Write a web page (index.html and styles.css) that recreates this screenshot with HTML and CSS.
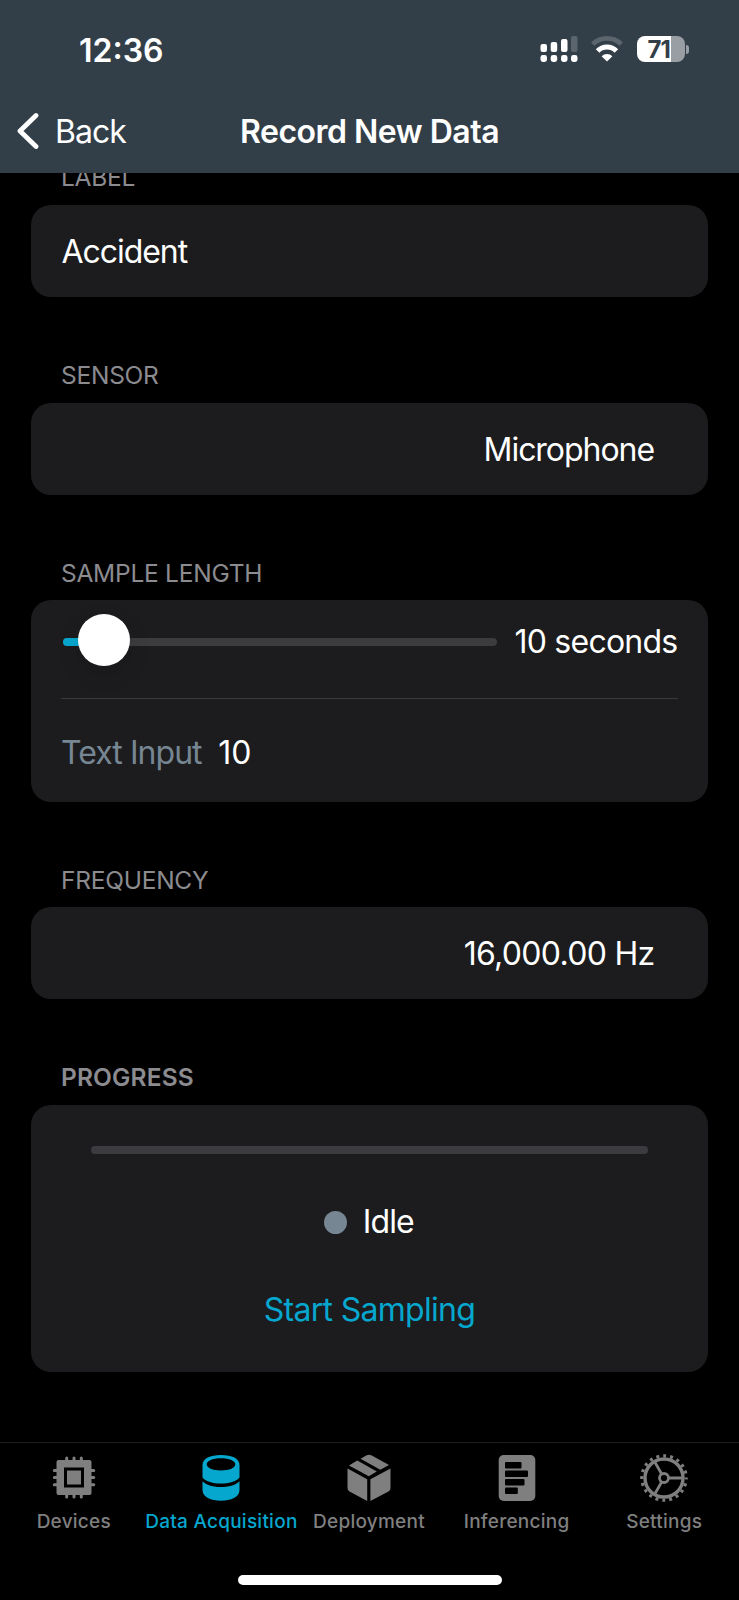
FILE: index.html
```html
<!DOCTYPE html>
<html lang="en">
<head>
<meta charset="utf-8">
<title>Record New Data</title>
<link rel="stylesheet" href="styles.css">
</head>
<body>
<div class="screen">
  <header class="header">
    <div class="status">
      <span class="time">12:36</span>
      <div class="indicators">
        <svg class="signal" viewBox="0 0 38 28" width="38" height="28" fill="#fff">
          <rect x="0.5" y="9" width="6.5" height="8" rx="2"/><rect x="10.7" y="7" width="6.5" height="10" rx="2"/><rect x="21" y="4" width="6.5" height="13" rx="2"/><rect x="31" y="1" width="6.5" height="16" rx="2" fill="#5b656d"/>
          <rect x="0.5" y="20" width="6.5" height="7" rx="2.4"/><rect x="10.7" y="20" width="6.5" height="7" rx="2.4"/><rect x="21" y="20" width="6.5" height="7" rx="2.4"/><rect x="31" y="20" width="6.5" height="7" rx="2.4"/>
        </svg>
        <svg class="wifi" viewBox="0 0 34 28" width="34" height="28">
          <path d="M2.700 9.200a20.500 20.500 0 0 1 28.600 0" fill="none" stroke="#5b656d" stroke-width="4.600"/>
          <path d="M7.600 16a13 13 0 0 1 18.800 0" fill="none" stroke="#fff" stroke-width="5"/>
          <path d="M11.600 21.200a7.600 7.600 0 0 1 10.800 0L17 26.500z" fill="#fff"/>
        </svg>
        <div class="battery"><span class="cell">71</span><span class="nub"></span></div>
      </div>
    </div>
    <nav class="navbar">
      <a class="back"><svg viewBox="0 0 24 38" width="24" height="38"><path d="M21 3.500 5 19l16 15.500" fill="none" stroke="#fff" stroke-width="4.800" stroke-linecap="round" stroke-linejoin="round"/></svg><span>Back</span></a>
      <h1 class="title">Record New Data</h1>
    </nav>
  </header>

  <main class="form">
    <section class="group">
      <h2 class="label">LABEL</h2>
      <div class="card row"><span class="accident">Accident</span></div>
    </section>
    <section class="group">
      <h2 class="label">SENSOR</h2>
      <div class="card row end"><span class="mic">Microphone</span></div>
    </section>
    <section class="group">
      <h2 class="label">SAMPLE LENGTH</h2>
      <div class="card length">
        <div class="slider-row">
          <div class="track"><div class="fill"></div><div class="thumb"></div></div>
          <span class="seconds">10 seconds</span>
        </div>
        <div class="input-row"><span class="hint">Text Input</span><span class="ten">10</span></div>
      </div>
    </section>
    <section class="group">
      <h2 class="label">FREQUENCY</h2>
      <div class="card row end"><span class="hz">16,000.00 Hz</span></div>
    </section>
    <section class="group">
      <h2 class="label strong">PROGRESS</h2>
      <div class="card progress">
        <div class="bar"></div>
        <div class="state"><i class="dot"></i><span class="idle">Idle</span></div>
        <a class="start">Start Sampling</a>
      </div>
    </section>
  </main>

  <footer class="footer">
    <nav class="tabs">
      <a class="tab">
        <svg viewBox="0 0 50 50" width="50" height="50" fill="currentColor">
          <path fill-rule="evenodd" d="M9.500 7h31a2 2 0 0 1 2 2v31a2 2 0 0 1-2 2h-31a2 2 0 0 1-2-2V9a2 2 0 0 1 2-2zM15 14.500V34.500H35V14.500z"/>
          <path d="M18 17.500h14v14H18z"/>
          <path d="M17.700 5v5M25 5v5M32.300 5v5M17.700 40v4M25 40v4M32.300 40v4M5.300 17.500h5M5.300 24.600h5M5.300 31.800h5M40 17.500h4.700M40 24.600h4.700M40 31.800h4.700" stroke="currentColor" stroke-width="3" stroke-linecap="round"/>
        </svg>
        <span>Devices</span></a>
      <a class="tab active">
        <svg viewBox="0 0 50 50" width="50" height="50" fill="currentColor">
          <path fill-rule="evenodd" d="M6.500 12C6.500 5.500 14 2 25 2s18.500 3.500 18.500 10v12.500C40 28.700 33 30.600 25 30.600S10 28.700 6.500 24.500zM10.700 11.300c0 3.500 5.800 6.200 14.300 6.200s14.300-2.700 14.300-6.200S33.500 5.200 25 5.200s-14.300 2.600-14.300 6.100z"/>
          <path d="M6.500 28.300C11 32.500 17.500 34 25 34s14-1.500 18.500-5.700V37c0 7-8.500 10.800-18.500 10.800S6.500 44 6.500 37z"/>
        </svg>
        <span>Data Acquisition</span></a>
      <a class="tab">
        <svg viewBox="0 0 50 50" width="50" height="50" fill="currentColor">
          <path d="M3.500 15.500 23.200 26.300V48L5.500 38.600a4 4 0 0 1-2-3.500z"/>
          <path d="M46.500 15.500 26.400 26.300V48l18.100-9.400a4 4 0 0 0 2-3.500z"/>
          <path d="M5 12.500 13.300 7.500 32.800 18.600 24.800 23.300z"/>
          <path d="M16.500 5.800 22.200 2.500q2.800-1.500 5.600 0L45 12l-8.700 4.800z"/>
        </svg>
        <span>Deployment</span></a>
      <a class="tab">
        <svg viewBox="0 0 50 50" width="50" height="50">
          <rect x="6.700" y="2" width="36.600" height="46" rx="5" fill="currentColor"/>
          <g fill="#000"><rect x="13" y="9" width="16.500" height="6.500" rx="1"/><rect x="13" y="17.500" width="23" height="6.500" rx="1"/><rect x="13" y="26" width="19.500" height="6.500" rx="1"/><rect x="13" y="34.500" width="12.800" height="6.500" rx="1"/></g>
        </svg>
        <span>Inferencing</span></a>
      <a class="tab">
        <svg viewBox="0 0 50 50" width="50" height="50" fill="none" stroke="currentColor">
          <circle cx="25" cy="25" r="19" stroke-width="3.400"/>
          <circle cx="25" cy="25" r="22.200" stroke-width="3.200" stroke-dasharray="2.900 4.074" stroke-dashoffset="1.450"/>
          <circle cx="25" cy="25" r="4.500" stroke-width="2.800"/>
          <path d="M30 25h14M22.500 20.700 15.500 8.500M22.500 29.300l-7 12.200" stroke-width="2.800"/>
        </svg>
        <span>Settings</span></a>
    </nav>
    <div class="home"></div>
  </footer>
</div>
</body>
</html>
```
FILE: styles.css
```css
* { box-sizing: border-box; }
body { margin: 0; background: #000; font-family: Inter, "Liberation Sans", sans-serif; color: #fff; }
h1, h2 { margin: 0; }
.screen { width: 739px; height: 1600px; display: flex; flex-direction: column; overflow: hidden; font-size: 32px; line-height: 40px; white-space: nowrap; }
.header { height: 173px; flex: none; background: #323e48; position: relative; z-index: 1; }
.status { height: 98px; padding: 0 50px 0 79px; display: flex; justify-content: space-between; align-items: center; }
.time { font-weight: 600; margin-top: 3px; }
.indicators { display: flex; align-items: center; }
.wifi { margin-left: 12px; }
.battery { display: flex; align-items: center; margin-left: 13px; gap: 1.500px; }
.cell { width: 48px; height: 26px; border-radius: 8px; background: linear-gradient(90deg, #fff 34px, #989ea4 34px); color: #323e48; font-size: 24px; line-height: 27px; font-weight: 700; padding-left: 11px; letter-spacing: -1px; }
.nub { width: 3px; height: 9px; border-radius: 0 3px 3px 0; background: #989ea4; }
.navbar { height: 67px; display: grid; grid-template-columns: 1fr auto 1fr; align-items: center; padding-left: 15px; padding-right: 15px; }
.back { display: flex; align-items: center; gap: 16px; letter-spacing: -1px; }
.back svg { margin-top: -1px; }
.title { font-size: 32px; line-height: 40px; font-weight: 600; letter-spacing: -0.5px; }
.form { flex: 1; padding: 0 31px; margin-top: -11px; }
.group { margin-bottom: 55px; }
.label { height: 50.400px; padding: 7px 0 0 30px; font-size: 24.500px; line-height: 32px; font-weight: 400; color: #8b8b90; letter-spacing: -0.25px; }
.group:first-child .label { height: 43px; padding-top: 0; margin-top: -1px; margin-bottom: 1px; }
.label.strong { font-weight: 600; letter-spacing: .15px; }
.card { background: #1c1c1e; border-radius: 20px; }
.row { height: 92.300px; padding: 2px 53.500px 0 30.500px; display: flex; align-items: center; }
.accident { letter-spacing: -1.05px; }
.end { justify-content: flex-end; }
.mic { letter-spacing: -1.05px; margin-right: .5px; }
.hz { letter-spacing: -0.7px; }
.length { height: 201.300px; padding: 0 30.500px 0 30px; }
.slider-row { height: 99px; border-bottom: 1px solid #3a3a3d; display: flex; justify-content: space-between; padding-left: 1.500px; padding-top: 21.500px; }
.track { width: 434.500px; height: 8px; border-radius: 4px; background: #3c3c3e; margin-top: 16.500px; position: relative; }
.fill { width: 40px; height: 8px; border-radius: 4px; background: #06a7ce; }
.thumb { position: absolute; left: 15px; top: -24px; width: 52px; height: 52px; border-radius: 50%; background: #fff; box-shadow: 0 8px 22px rgba(0,0,0,.12); }
.seconds { letter-spacing: -0.75px; }
.input-row { height: 102px; display: flex; align-items: center; gap: 16.500px; padding-top: 5px; }
.hint { color: #768692; letter-spacing: -0.95px; }
.progress { height: 267.300px; padding: 41.500px 60px 0; display: flex; flex-direction: column; align-items: center; }
.bar { align-self: stretch; height: 8px; border-radius: 4px; background: #3c3c40; }
.state { display: flex; align-items: center; gap: 15.500px; margin: 48px 1px 0 0; }
.dot { width: 23px; height: 23px; border-radius: 50%; background: #768692; }
.idle { letter-spacing: -0.9px; }
.start { color: #06a7ce; margin-top: 47.500px; letter-spacing: -0.7px; }
.footer { height: 158px; flex: none; border-top: 1px solid #1d1d1d; background: #000; }
.tabs { display: grid; grid-template-columns: repeat(5, minmax(0, 1fr)); height: 132px; padding: 10px 1px 0 0; }
.tab { display: flex; flex-direction: column; align-items: center; font-size: 19px; line-height: 24px; font-weight: 500; color: #7f7f7f; letter-spacing: .25px; }
.tab span { margin-top: 7px; }
.tab.active { color: #06a7ce; }
.home { width: 264px; height: 10px; border-radius: 5px; background: #fff; margin: 0 auto; }
```
